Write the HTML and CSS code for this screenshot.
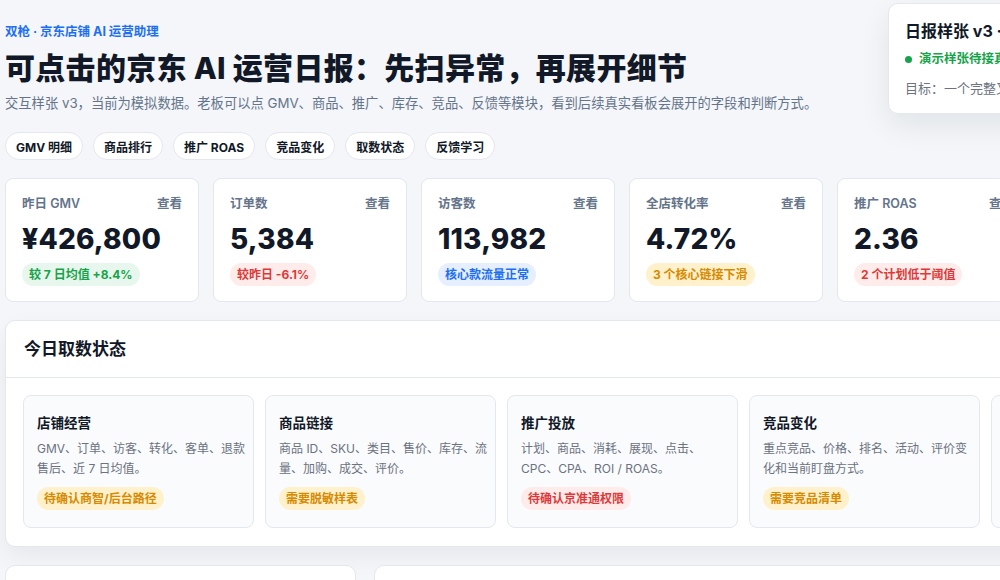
FILE: index.html
```html
<!DOCTYPE html>
<html lang="zh-CN">
<head>
  <meta charset="UTF-8">
  <title>京东 AI 运营日报</title>
  <link rel="stylesheet" href="styles.css">
</head>
<body>
  <div class="page">
    <header class="top">
      <div class="intro">
        <div class="eyebrow">双枪 · 京东店铺 AI 运营助理</div>
        <h1>可点击的京东 AI 运营日报：先扫异常，再展开细节</h1>
        <p class="sub">交互样张 v3，当前为模拟数据。老板可以点 GMV、商品、推广、库存、竞品、反馈等模块，看到后续真实看板会展开的字段和判断方式。</p>
        <nav class="chips">
          <button class="chip">GMV 明细</button>
          <button class="chip">商品排行</button>
          <button class="chip">推广 ROAS</button>
          <button class="chip">竞品变化</button>
          <button class="chip">取数状态</button>
          <button class="chip">反馈学习</button>
        </nav>
      </div>
      <aside class="summary">
        <div class="summary-title">日报样张 v3 · 模拟数据</div>
        <div class="summary-status"><span class="dot"></span>演示样张待接真实数据</div>
        <div class="summary-goal">目标：一个完整又能点开的日报</div>
      </aside>
    </header>

    <section class="kpis">
      <div class="kpi">
        <div class="kpi-head"><span>昨日 GMV</span><span>查看</span></div>
        <div class="kpi-value">¥426,800</div>
        <span class="tag green">较 7 日均值 +8.4%</span>
      </div>
      <div class="kpi">
        <div class="kpi-head"><span>订单数</span><span>查看</span></div>
        <div class="kpi-value">5,384</div>
        <span class="tag red">较昨日 -6.1%</span>
      </div>
      <div class="kpi">
        <div class="kpi-head"><span>访客数</span><span>查看</span></div>
        <div class="kpi-value">113,982</div>
        <span class="tag blue">核心款流量正常</span>
      </div>
      <div class="kpi">
        <div class="kpi-head"><span>全店转化率</span><span>查看</span></div>
        <div class="kpi-value">4.72%</div>
        <span class="tag amber">3 个核心链接下滑</span>
      </div>
      <div class="kpi">
        <div class="kpi-head"><span>推广 ROAS</span><span>查看</span></div>
        <div class="kpi-value">2.36</div>
        <span class="tag red">2 个计划低于阈值</span>
      </div>
    </section>

    <section class="panel">
      <div class="panel-head">今日取数状态</div>
      <div class="sources">
        <div class="source">
          <div class="source-title">店铺经营</div>
          <p>GMV、订单、访客、转化、客单、退款<br>售后、近 7 日均值。</p>
          <span class="tag amber">待确认商智/后台路径</span>
        </div>
        <div class="source">
          <div class="source-title">商品链接</div>
          <p>商品 ID、SKU、类目、售价、库存、流<br>量、加购、成交、评价。</p>
          <span class="tag amber">需要脱敏样表</span>
        </div>
        <div class="source">
          <div class="source-title">推广投放</div>
          <p>计划、商品、消耗、展现、点击、<br>CPC、CPA、ROI / ROAS。</p>
          <span class="tag red">待确认京准通权限</span>
        </div>
        <div class="source">
          <div class="source-title">竞品变化</div>
          <p>重点竞品、价格、排名、活动、评价变<br>化和当前盯盘方式。</p>
          <span class="tag amber">需要竞品清单</span>
        </div>
        <div class="source">
          <div class="source-title">反馈学习</div>
          <p>老板批注、处理结果、复盘结论。</p>
          <span class="tag blue">已开启</span>
        </div>
      </div>
    </section>

    <section class="lower">
      <div class="block"></div>
      <div class="block"></div>
    </section>
  </div>
</body>
</html>
```

FILE: styles.css
```css
html, body { margin: 0; overflow: hidden; }
body { background: #f4f6f9; font-family: "Inter", "Noto Sans CJK SC", sans-serif; color: #111827; }
.page { width: 1026px; padding: 3px 0 0 5px; }

.top { display: grid; grid-template-columns: 883px 320px; }
.intro { padding-top: 20px; }
.eyebrow { color: #1d6ff2; font-size: 12.5px; font-weight: 700; line-height: 18px; }
h1 { margin: 7px 0 0; font-size: 30px; line-height: 40px; font-weight: 800; letter-spacing: 0.3px; }
.sub { margin: 4px 0 0; font-size: 13.3px; line-height: 22px; color: #64748b; }
.chips { display: flex; gap: 10px; margin-top: 18px; }
.chip { height: 28px; padding: 0 10px; border: 1px solid #e3e7ee; border-radius: 14px; background: #fff; font: 700 12px "Inter", "Noto Sans CJK SC", sans-serif; color: #111827; }

.summary { align-self: start; background: #fff; border: 1px solid #e5e8ee; border-radius: 10px; padding: 17px 17px 12px 16px; box-shadow: 0 12px 30px rgba(15, 23, 42, 0.08); height: 80px; }
.summary-title { font-size: 16px; font-weight: 700; line-height: 20px; white-space: nowrap; }
.summary-status { margin-top: 8px; font-size: 12.5px; font-weight: 700; color: #16a34a; line-height: 20px; display: flex; align-items: center; white-space: nowrap; }
.dot { width: 7px; height: 7px; border-radius: 50%; background: #16a34a; margin-right: 7px; }
.summary-goal { margin-top: 9px; font-size: 13px; color: #6b7280; line-height: 20px; white-space: nowrap; }

.kpis { display: grid; grid-template-columns: repeat(5, 194px); gap: 14px; margin-top: 18px; }
.kpi { background: #fff; border: 1px solid #e3e7ee; border-radius: 8px; padding: 16px; height: 90px; }
.kpi-head { display: flex; justify-content: space-between; font-size: 12.5px; font-weight: 600; color: #64748b; line-height: 18px; }
.kpi-value { margin-top: 9px; font-size: 28px; font-weight: 800; line-height: 34px; letter-spacing: 0.2px; }
.kpi .tag { margin-top: 7px; }

.tag { display: inline-block; height: 23px; line-height: 23px; padding: 0 7px; border-radius: 12px; font-size: 12px; font-weight: 700; }
.green { color: #16a34a; background: #e8f7ee; }
.red { color: #dc3a3a; background: #feeceb; }
.blue { color: #1d6ff2; background: #e6efff; }
.amber { color: #d68a00; background: #fff1cc; }

.panel { margin-top: 18px; background: #fff; border: 1px solid #e3e7ee; border-radius: 10px; box-shadow: 0 10px 24px rgba(15, 23, 42, 0.06); overflow: hidden; }
.panel-head { height: 56px; line-height: 56px; padding: 0 18px; font-size: 17px; font-weight: 700; border-bottom: 1px solid #e3e7ee; }
.sources { display: grid; grid-auto-flow: column; grid-auto-columns: 231px; gap: 11px; padding: 17px 17px 18px; }
.source { background: #fafbfd; border: 1px solid #e3e7ee; border-radius: 8px; padding: 16px 13px 17px; }
.source-title { font-size: 13.5px; font-weight: 700; line-height: 22px; }
.source p { margin: 5px 0 0; font-size: 12px; line-height: 20px; color: #6b7280; white-space: nowrap; }
.source .tag { margin-top: 8px; }

.lower { display: grid; grid-template-columns: 351px 700px; gap: 18px; margin-top: 18px; }
.block { height: 60px; background: #fff; border: 1px solid #e3e7ee; border-radius: 10px; }
```
